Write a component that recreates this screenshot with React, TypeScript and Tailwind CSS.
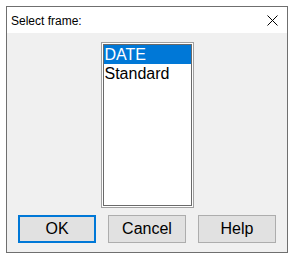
export default function App() {
  const items = ["DATE", "Standard"];
  const selected = 0;

  return (
    <div className="w-[296px] h-[258px] bg-white p-[6px]" style={{ fontFamily: '"Liberation Sans", Arial, sans-serif' }}>
      <div className="w-[282px] h-[247px] border border-[#6f6f6f] flex flex-col bg-[#f0f0f0]">
        {/* Title bar */}
        <div className="h-[26px] bg-white flex items-center justify-between pl-[4px] pr-[8px] shrink-0">
          <span className="text-[12px] text-black leading-none pt-[1px]">Select frame:</span>
          <svg width="11" height="11" viewBox="0 0 11 11" className="mr-[1px]">
            <path d="M0.5 0.5 L10.5 10.5 M10.5 0.5 L0.5 10.5" stroke="#000" strokeWidth="1" />
          </svg>
        </div>

        {/* Body */}
        <div className="flex-1 flex flex-col items-center pt-[9px]">
          <div className="w-[93px] h-[166px] border border-[#a0a0a0] bg-white p-[1px]">
            <div className="w-full h-full border border-[#6a6a6a] bg-white">
              {items.map((item, i) => (
                <div
                  key={item}
                  className={`h-[19px] pl-[1px] text-[16px] leading-[19px] ${
                    i === selected ? "bg-[#0078d7] text-white" : "text-black"
                  }`}
                >
                  {item}
                </div>
              ))}
            </div>
          </div>

          <div className="flex gap-[12px] mt-[7px] w-full pl-[11px]">
            <button
              type="button"
              className="w-[78px] h-[28px] bg-[#e1e1e1] border-2 border-[#0078d7] text-[16px] text-black"
            >
              OK
            </button>
            <button
              type="button"
              className="w-[78px] h-[28px] bg-[#e1e1e1] border border-[#adadad] text-[16px] text-black"
            >
              Cancel
            </button>
            <button
              type="button"
              className="w-[78px] h-[28px] bg-[#e1e1e1] border border-[#adadad] text-[16px] text-black"
            >
              Help
            </button>
          </div>
        </div>
      </div>
    </div>
  );
}
